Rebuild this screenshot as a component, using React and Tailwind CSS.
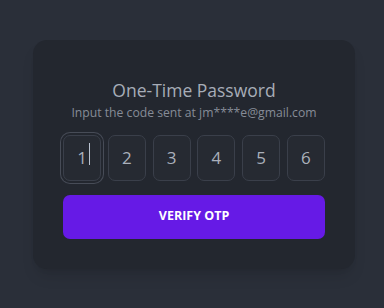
import { useState } from 'react';

const DIGITS = ['1', '2', '3', '4', '5', '6'];

export default function App() {
  const [code] = useState(DIGITS);

  return (
    <div className="w-full h-screen flex items-center justify-center bg-[#2a2f39]"
      style={{ fontFamily: '"Open Sans", "Noto Sans", sans-serif' }}>
      <div className="ml-[4px] w-[322px] rounded-[14px] bg-[#23272f] shadow-lg px-[30px] pt-[37px] pb-[30px]">
        <h1 className="text-center text-[17.5px] leading-[26px] text-[#a7adb8]">One-Time Password</h1>
        <p className="text-center text-[12.2px] leading-[19px] text-[#868c97] whitespace-nowrap">
          Input the code sent at jm****e@gmail.com
        </p>

        {/* code boxes */}
        <div className="flex justify-between mt-[13px]">
          {code.map((d, i) => (
            <div key={i}
              className={"w-[38px] h-[46px] rounded-[7px] border border-[#3a3f4a] bg-[#262a32] flex items-center justify-center text-[17px] text-[#aab0bb] " +
                (i === 0 ? 'ring-1 ring-[#474c57] ring-offset-2 ring-offset-[#23272f]' : '')}>
              <span className="relative">
                {d}
                {i === 0 && <span className="absolute left-[calc(100%+2px)] top-[-2px] w-px h-[22px] bg-[#b9c2d0]" />}
              </span>
            </div>
          ))}
        </div>

        <button className="mt-[14px] w-full h-[44px] rounded-[7px] bg-[#661ae6] text-white text-[12.5px] font-bold">
          VERIFY OTP
        </button>
      </div>
    </div>
  );
}
